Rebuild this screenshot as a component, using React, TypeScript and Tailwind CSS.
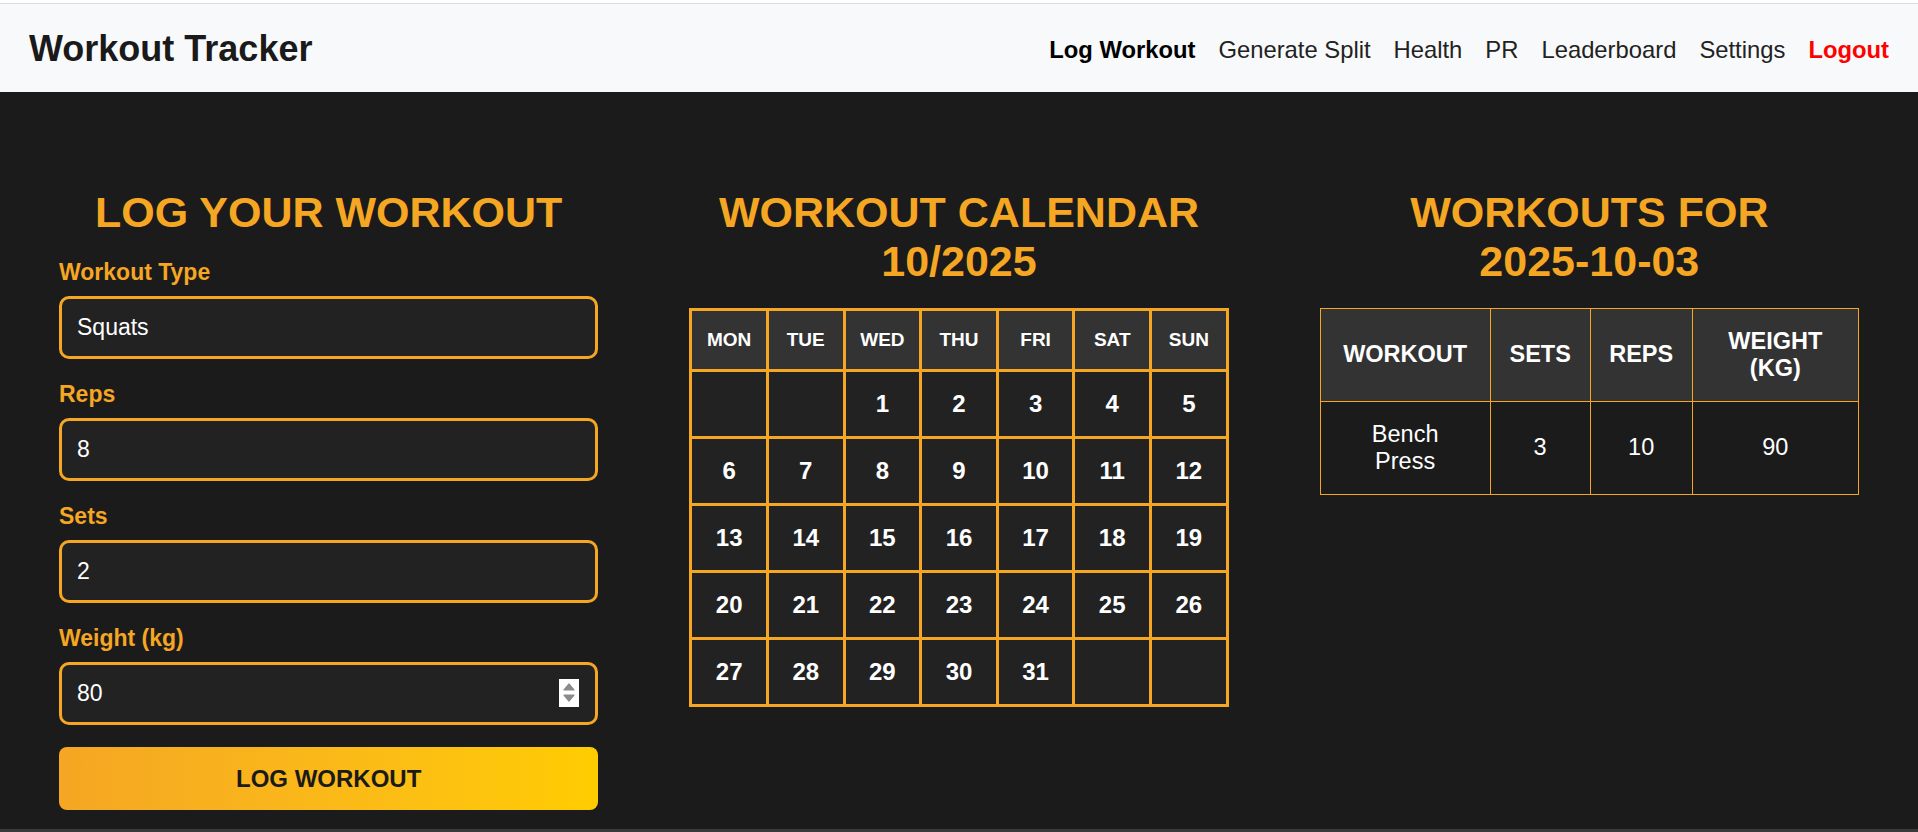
import React from "react";

const weeks: (number | null)[][] = [
  [null, null, 1, 2, 3, 4, 5],
  [6, 7, 8, 9, 10, 11, 12],
  [13, 14, 15, 16, 17, 18, 19],
  [20, 21, 22, 23, 24, 25, 26],
  [27, 28, 29, 30, 31, null, null],
];

const days = ["MON", "TUE", "WED", "THU", "FRI", "SAT", "SUN"];

function Field({ label, value, spinner }: { label: string; value: string; spinner?: boolean }) {
  return (
    <div className="mb-[22.5px]">
      <label className="block text-[23px] font-bold text-[#f5a623] mb-[10px]">{label}</label>
      <div className="relative">
        <input
          type="text"
          readOnly
          defaultValue={value}
          className="w-full h-[63px] bg-[#222222] border-[3px] border-[#f5a623] rounded-[10px] px-[15px] text-white text-[23px] outline-none"
        />
        {spinner && (
          <span className="absolute right-[19px] top-[17px] w-[20px] h-[28px] bg-white flex flex-col items-center justify-center gap-[3px]">
            <svg width="12" height="8" viewBox="0 0 12 8">
              <path d="M6 1 L11 7 L1 7 Z" fill="#8a8a8a" stroke="#8a8a8a" strokeWidth="1.2" strokeLinejoin="round" />
            </svg>
            <svg width="12" height="8" viewBox="0 0 12 8">
              <path d="M6 7 L11 1 L1 1 Z" fill="#8a8a8a" stroke="#8a8a8a" strokeWidth="1.2" strokeLinejoin="round" />
            </svg>
          </span>
        )}
      </div>
    </div>
  );
}

export default function App() {
  return (
    <div className="w-[1918px] h-[832px] flex flex-col overflow-hidden leading-[1.15] font-['Liberation_Sans',Arial,sans-serif]">
      <div className="h-[3px] bg-white shrink-0" />
      <nav className="h-[89px] shrink-0 bg-[#f8f9fa] border-t border-[#dcdcdc] flex items-center justify-between px-[29px]">
        <div className="text-[36px] font-bold text-[#1a1a1a] mt-[2px]">Workout Tracker</div>
        <div className="flex items-center gap-[23px] text-[23.8px] text-[#222222] mt-[3px]">
          <span className="font-bold text-black">Log Workout</span>
          <span>Generate Split</span>
          <span>Health</span>
          <span>PR</span>
          <span>Leaderboard</span>
          <span>Settings</span>
          <span className="font-bold text-[#ff0000]">Logout</span>
        </div>
      </nav>
      <main className="flex-1 bg-[#1b1b1b] grid grid-cols-3 gap-x-[91px] px-[59px] pt-[96px] items-start">
        <section>
          <h2 className="text-[43px] font-bold text-[#f5a623] text-center mb-[22px]">LOG YOUR WORKOUT</h2>
          <Field label="Workout Type" value="Squats" />
          <Field label="Reps" value="8" />
          <Field label="Sets" value="2" />
          <Field label="Weight (kg)" value="80" spinner />
          <button className="w-full h-[63px] rounded-[8px] bg-linear-to-r from-[#f5a623] to-[#ffcc00] text-[24px] font-bold text-[#1a1a1a]">
            LOG WORKOUT
          </button>
        </section>
        <section>
          <h2 className="text-[43px] font-bold text-[#f5a623] text-center mb-[21px]">
            WORKOUT CALENDAR
            <br />
            10/2025
          </h2>
          <div className="grid grid-cols-7 bg-[#f5a623] p-[3px] gap-[3px]">
            {days.map((d) => (
              <div key={d} className="h-[58px] bg-[#333333] flex items-center justify-center text-[19px] font-bold text-white">
                {d}
              </div>
            ))}
            {weeks.flat().map((n, i) => (
              <div key={i} className="h-[64px] bg-[#222222] flex items-center justify-center text-[24px] font-bold text-white">
                {n ?? ""}
              </div>
            ))}
          </div>
        </section>
        <section>
          <h2 className="text-[43px] font-bold text-[#f5a623] text-center mb-[21px]">
            WORKOUTS FOR
            <br />
            2025-10-03
          </h2>
          <table className="w-full table-fixed border-collapse border border-[#f5a623] text-white text-[23.5px]">
            <colgroup>
              <col className="w-[170px]" />
              <col className="w-[100px]" />
              <col className="w-[102px]" />
              <col />
            </colgroup>
            <thead>
              <tr className="bg-[#333333]">
                <th className="border border-[#f5a623] px-[18px] py-[19px] font-bold text-center">WORKOUT</th>
                <th className="border border-[#f5a623] px-[18px] py-[19px] font-bold text-center">SETS</th>
                <th className="border border-[#f5a623] px-[18px] py-[19px] font-bold text-center">REPS</th>
                <th className="border border-[#f5a623] px-[18px] py-[19px] font-bold text-center">WEIGHT (KG)</th>
              </tr>
            </thead>
            <tbody>
              <tr>
                <td className="border border-[#f5a623] px-[18px] py-[19px] text-center">Bench Press</td>
                <td className="border border-[#f5a623] px-[18px] py-[19px] text-center">3</td>
                <td className="border border-[#f5a623] px-[18px] py-[19px] text-center">10</td>
                <td className="border border-[#f5a623] px-[18px] py-[19px] text-center">90</td>
              </tr>
            </tbody>
          </table>
        </section>
      </main>
      <div className="h-[3px] bg-[#3a3a3a] shrink-0" />
    </div>
  );
}
